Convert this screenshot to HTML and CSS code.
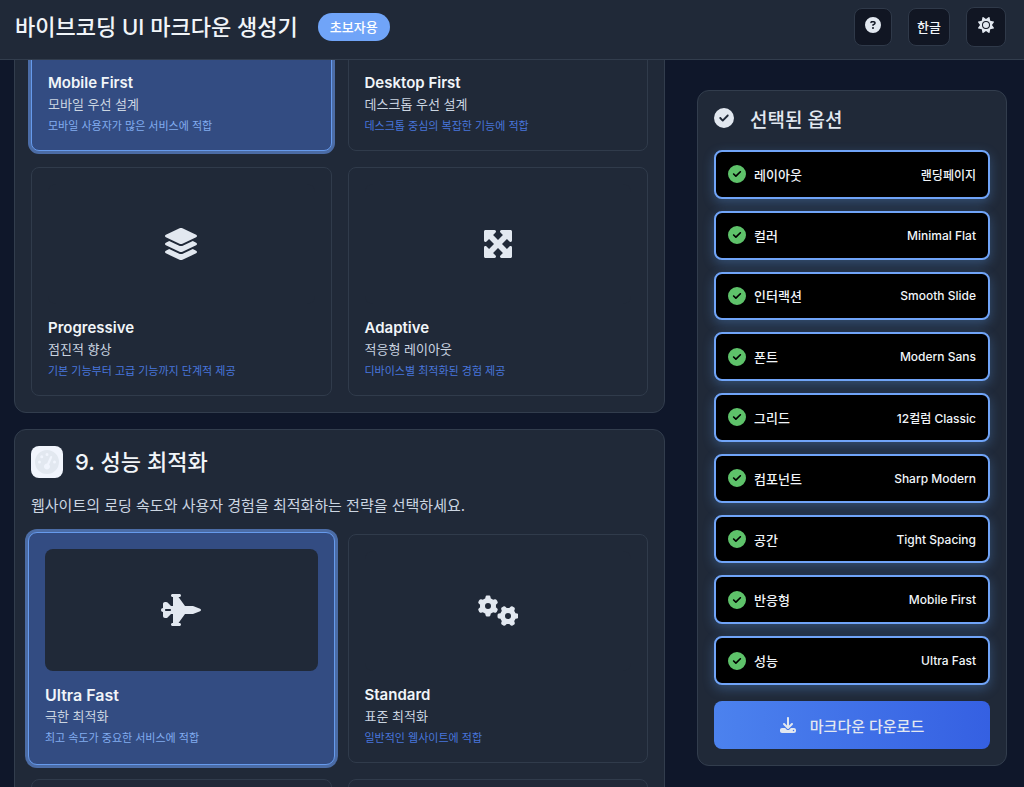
FILE: index.html
```html
<!DOCTYPE html>
<html lang="ko">
<head>
    <meta charset="UTF-8">
    <meta name="viewport" content="width=device-width, initial-scale=1.0">
    <title>바이브코딩 UI 마크다운 생성기</title>
    <link rel="stylesheet" href="styles.css">
</head>
<body>
    <svg class="sprite" aria-hidden="true">
        <symbol id="icon-check" viewBox="0 0 512 512">
            <path d="M256 512A256 256 0 1 0 256 0a256 256 0 1 0 0 512zM369 209L241 337c-9.400 9.400-24.600 9.400-33.900 0l-64-64c-9.400-9.400-9.400-24.600 0-33.900s24.600-9.400 33.900 0l47 47L335 175c9.400-9.400 24.600-9.400 33.900 0s9.400 24.600 0 33.900z"/>
        </symbol>
        <symbol id="icon-gear" viewBox="0 0 320 352">
            <path d="M308.500 135.300c7.100-6.300 9.900-16.200 6.200-25c-2.300-5.300-4.800-10.500-7.600-15.500L304 89.400c-3-5-6.300-9.900-9.800-14.600c-5.700-7.600-15.700-10.100-24.700-7.100l-28.200 9.300c-10.700-8.800-23-16-36.200-20.900L199 27.100c-1.900-9.300-9.100-16.700-18.500-17.800C173.900 8.400 167.200 8 160.400 8h-.7c-6.800 0-13.500 .4-20.100 1.200c-9.400 1.100-16.600 8.600-18.500 17.800L115 56.100c-13.300 5-25.500 12.100-36.200 20.900L50.500 67.800c-9-3-19-.5-24.700 7.100c-3.500 4.700-6.800 9.600-9.900 14.600l-3 5.300c-2.800 5-5.300 10.200-7.600 15.600c-3.700 8.700-.9 18.600 6.200 25l22.200 19.800C32.600 161.900 32 168.900 32 176s.6 14.100 1.700 20.900L11.500 216.700c-7.100 6.300-9.900 16.200-6.200 25c2.300 5.300 4.800 10.500 7.600 15.600l3 5.200c3 5.100 6.300 9.900 9.900 14.600c5.700 7.600 15.700 10.100 24.700 7.100l28.200-9.300c10.700 8.800 23 16 36.200 20.900l6.100 29.100c1.900 9.300 9.100 16.700 18.500 17.800c6.700 .8 13.500 1.200 20.400 1.200s13.700-.4 20.400-1.200c9.400-1.100 16.600-8.600 18.500-17.800l6.100-29.100c13.300-5 25.500-12.100 36.200-20.900l28.200 9.300c9 3 19 .5 24.700-7.100c3.500-4.700 6.800-9.500 9.800-14.600l3.100-5.400c2.800-5 5.300-10.200 7.600-15.500c3.700-8.700 .9-18.600-6.200-25l-22.200-19.800c1.100-6.800 1.700-13.800 1.700-20.900s-.6-14.100-1.700-20.900l22.200-19.800zM112 176a48 48 0 1 1 96 0 48 48 0 1 1 -96 0z"/>
        </symbol>
    </svg>

    <header class="header">
        <h1>바이브코딩 UI 마크다운 생성기</h1>
        <span class="badge">초보자용</span>
        <div class="header-actions">
            <button class="btn-header" aria-label="도움말">
                <svg class="icon" viewBox="0 0 512 512"><path d="M256 512A256 256 0 1 0 256 0a256 256 0 1 0 0 512zM169.800 165.300c7.900-22.300 29.100-37.300 52.800-37.300h58.300c34.900 0 63.100 28.300 63.100 63.100c0 22.600-12.100 43.500-31.700 54.800L280 264.400c-.2 13-10.900 23.600-24 23.600c-13.300 0-24-10.700-24-24V250.500c0-8.600 4.600-16.500 12.100-20.800l44.300-25.400c4.700-2.700 7.600-7.700 7.600-13.100c0-8.400-6.800-15.100-15.100-15.100H222.600c-3.400 0-6.400 2.100-7.500 5.300l-.4 1.200c-4.400 12.500-18.200 19-30.600 14.600s-19-18.200-14.600-30.600l.4-1.200zM224 352a32 32 0 1 1 64 0 32 32 0 1 1 -64 0z"/></svg>
            </button>
            <button class="btn-header">한글</button>
            <button class="btn-header btn-theme" aria-label="테마">
                <svg class="icon" viewBox="0 0 512 512"><path d="M361.500 1.200c5 2.100 8.600 6.600 9.600 11.900L391 121l107.900 19.800c5.300 1 9.800 4.600 11.900 9.600s1.500 10.700-1.600 15.200L446.900 256l62.300 90.300c3.100 4.500 3.700 10.200 1.600 15.200s-6.600 8.600-11.900 9.600L391 391 371.100 498.900c-1 5.300-4.600 9.800-9.600 11.900s-10.700 1.500-15.200-1.600L256 446.900l-90.300 62.300c-4.500 3.100-10.200 3.700-15.200 1.600s-8.600-6.600-9.600-11.900L121 391 13.100 371.100c-5.300-1-9.800-4.600-11.900-9.600s-1.500-10.700 1.600-15.200L65.100 256 2.800 165.700c-3.100-4.500-3.700-10.200-1.600-15.200s6.600-8.600 11.900-9.600L121 121 140.900 13.100c1-5.300 4.600-9.800 9.600-11.900s10.700-1.500 15.200 1.600L256 65.100 346.300 2.800c4.500-3.100 10.200-3.700 15.200-1.600zM160 256a96 96 0 1 1 192 0 96 96 0 1 1 -192 0zm224 0a128 128 0 1 0 -256 0 128 128 0 1 0 256 0z"/></svg>
            </button>
        </div>
    </header>

    <div class="container">
        <main class="sections">
            <section class="section section-scrolled">
                <div class="options">
                    <button class="card selected" aria-pressed="true">
                        <span class="preview"></span>
                        <span class="card-title">Mobile First</span>
                        <span class="card-sub">모바일 우선 설계</span>
                        <span class="card-desc">모바일 사용자가 많은 서비스에 적합</span>
                    </button>
                    <button class="card">
                        <span class="preview"></span>
                        <span class="card-title">Desktop First</span>
                        <span class="card-sub">데스크톱 우선 설계</span>
                        <span class="card-desc">데스크톱 중심의 복잡한 기능에 적합</span>
                    </button>
                    <button class="card">
                        <span class="preview">
                            <svg class="icon-preview" viewBox="0 0 576 512"><path d="M264.500 5.200c14.900-6.900 32.100-6.900 47 0l218.600 101c8.500 3.900 13.900 12.400 13.900 21.800s-5.400 17.900-13.900 21.800l-218.600 101c-14.900 6.900-32.100 6.900-47 0L45.900 149.800C37.400 145.800 32 137.300 32 128s5.400-17.900 13.900-21.800L264.500 5.200zM476.900 209.600l53.200 24.600c8.500 3.900 13.900 12.400 13.900 21.800s-5.400 17.900-13.900 21.800l-218.600 101c-14.900 6.900-32.100 6.900-47 0L45.900 277.800C37.400 273.800 32 265.300 32 256s5.400-17.900 13.900-21.800l53.200-24.600 152 70.200c23.400 10.800 50.400 10.800 73.800 0l152-70.200zm-152 198.200l152-70.200 53.200 24.600c8.500 3.900 13.900 12.400 13.900 21.800s-5.400 17.900-13.900 21.800l-218.600 101c-14.900 6.900-32.100 6.900-47 0L45.900 405.800C37.400 401.800 32 393.300 32 384s5.400-17.900 13.900-21.800l53.200-24.600 152 70.200c23.400 10.800 50.400 10.800 73.800 0z"/></svg>
                        </span>
                        <span class="card-title">Progressive</span>
                        <span class="card-sub">점진적 향상</span>
                        <span class="card-desc">기본 기능부터 고급 기능까지 단계적 제공</span>
                    </button>
                    <button class="card">
                        <span class="preview">
                            <svg class="icon-preview" viewBox="0 0 512 512"><path d="M200 32H56C42.700 32 32 42.700 32 56V200c0 9.700 5.800 18.500 14.800 22.200s19.300 1.700 26.200-5.200l40-40 79 79-79 79L73 295c-6.900-6.900-17.200-8.900-26.200-5.200S32 302.300 32 312V456c0 13.300 10.700 24 24 24H200c9.700 0 18.500-5.800 22.200-14.800s1.700-19.300-5.200-26.200l-40-40 79-79 79 79-40 40c-6.900 6.900-8.900 17.200-5.200 26.200s12.500 14.800 22.200 14.800H456c13.300 0 24-10.700 24-24V312c0-9.700-5.800-18.500-14.800-22.200s-19.300-1.700-26.200 5.200l-40 40-79-79 79-79 40 40c6.900 6.900 17.200 8.900 26.200 5.200s14.800-12.500 14.800-22.200V56c0-13.300-10.700-24-24-24H312c-9.700 0-18.500 5.800-22.200 14.800s-1.700 19.300 5.200 26.200l40 40-79 79-79-79 40-40c6.900-6.900 8.900-17.200 5.200-26.200S209.700 32 200 32z"/></svg>
                        </span>
                        <span class="card-title">Adaptive</span>
                        <span class="card-sub">적응형 레이아웃</span>
                        <span class="card-desc">디바이스별 최적화된 경험 제공</span>
                    </button>
                </div>
            </section>

            <section class="section">
                <div class="section-head">
                    <span class="section-icon">
                        <svg viewBox="0 0 512 512"><path d="M0 256a256 256 0 1 1 512 0A256 256 0 1 1 0 256zM288 96a32 32 0 1 0 -64 0 32 32 0 1 0 64 0zM256 416c35.300 0 64-28.700 64-64c0-17.400-6.900-33.100-18.100-44.600L366 161.700c5.300-12.100-.2-26.300-12.300-31.600s-26.300 .2-31.600 12.300L257.900 288c-.6 0-1.300 0-1.900 0c-35.300 0-64 28.700-64 64s28.700 64 64 64zM176 144a32 32 0 1 0 -64 0 32 32 0 1 0 64 0zM96 288a32 32 0 1 0 0-64 32 32 0 1 0 0 64zm352-32a32 32 0 1 0 -64 0 32 32 0 1 0 64 0z"/></svg>
                    </span>
                    <h2>9. 성능 최적화</h2>
                </div>
                <p class="section-desc">웹사이트의 로딩 속도와 사용자 경험을 최적화하는 전략을 선택하세요.</p>
                <div class="options">
                    <button class="card selected raised" aria-pressed="true">
                        <span class="preview">
                            <svg class="icon-preview" viewBox="0 0 640 512"><path d="M160 24c0-13.300 10.700-24 24-24H296c13.300 0 24 10.700 24 24s-10.700 24-24 24H280L384 192H500.400c7.700 0 15.300 1.400 22.500 4.100L625 234.400c9 3.400 15 12 15 21.600s-6 18.200-15 21.600L522.900 315.900c-7.200 2.700-14.800 4.100-22.500 4.100H384L280 464h16c13.300 0 24 10.700 24 24s-10.700 24-24 24H184c-13.300 0-24-10.700-24-24s10.700-24 24-24h8V320H160l-54.600 54.600c-6 6-14.100 9.400-22.600 9.400H64c-17.700 0-32-14.300-32-32V288c-17.700 0-32-14.300-32-32s14.300-32 32-32V160c0-17.700 14.300-32 32-32H82.700c8.500 0 16.600 3.400 22.600 9.400L160 192h32V48h-8c-13.300 0-24-10.700-24-24zM80 240c-8.800 0-16 7.200-16 16s7.200 16 16 16h64c8.800 0 16-7.200 16-16s-7.200-16-16-16H80z"/></svg>
                        </span>
                        <span class="card-title">Ultra Fast</span>
                        <span class="card-sub">극한 최적화</span>
                        <span class="card-desc">최고 속도가 중요한 서비스에 적합</span>
                    </button>
                    <button class="card">
                        <span class="preview">
                            <svg class="icon-preview" viewBox="0 0 640 512">
                                <use href="#icon-gear" width="320" height="352"/>
                                <use href="#icon-gear" width="320" height="352" transform="translate(480 336) rotate(90) translate(-160 -176)"/>
                            </svg>
                        </span>
                        <span class="card-title">Standard</span>
                        <span class="card-sub">표준 최적화</span>
                        <span class="card-desc">일반적인 웹사이트에 적합</span>
                    </button>
                    <button class="card" aria-label="옵션 3"><span class="preview"></span></button>
                    <button class="card" aria-label="옵션 4"><span class="preview"></span></button>
                </div>
            </section>
        </main>

        <aside class="sidebar">
            <div class="sidebar-head">
                <svg class="icon-head"><use href="#icon-check"/></svg>
                <h3>선택된 옵션</h3>
            </div>
            <ul class="selected-list">
                <li><svg class="icon-done"><use href="#icon-check"/></svg><span>레이아웃</span><b>랜딩페이지</b></li>
                <li><svg class="icon-done"><use href="#icon-check"/></svg><span>컬러</span><b>Minimal Flat</b></li>
                <li><svg class="icon-done"><use href="#icon-check"/></svg><span>인터랙션</span><b>Smooth Slide</b></li>
                <li><svg class="icon-done"><use href="#icon-check"/></svg><span>폰트</span><b>Modern Sans</b></li>
                <li><svg class="icon-done"><use href="#icon-check"/></svg><span>그리드</span><b>12컬럼 Classic</b></li>
                <li><svg class="icon-done"><use href="#icon-check"/></svg><span>컴포넌트</span><b>Sharp Modern</b></li>
                <li><svg class="icon-done"><use href="#icon-check"/></svg><span>공간</span><b>Tight Spacing</b></li>
                <li><svg class="icon-done"><use href="#icon-check"/></svg><span>반응형</span><b>Mobile First</b></li>
                <li><svg class="icon-done"><use href="#icon-check"/></svg><span>성능</span><b>Ultra Fast</b></li>
            </ul>
            <button class="btn-download">
                <svg class="icon" viewBox="0 0 512 512"><path d="M288 32c0-17.700-14.300-32-32-32s-32 14.300-32 32V274.700l-73.400-73.400c-12.500-12.500-32.800-12.500-45.300 0s-12.500 32.800 0 45.300l128 128c12.500 12.500 32.800 12.500 45.300 0l128-128c12.500-12.500 12.500-32.800 0-45.300s-32.800-12.500-45.300 0L288 274.700V32zM64 352c-35.300 0-64 28.700-64 64v32c0 35.300 28.700 64 64 64H448c35.300 0 64-28.700 64-64V416c0-35.300-28.700-64-64-64H346.500l-45.300 45.300c-25 25-65.500 25-90.500 0L165.500 352H64zm368 56a24 24 0 1 1 0 48 24 24 0 1 1 0-48z"/></svg>
                마크다운 다운로드
            </button>
        </aside>
    </div>
</body>
</html>
```
FILE: styles.css
```css
* {
    padding: 0;
    margin: 0;
    box-sizing: border-box;
}
body {
    height: 100vh;
    display: flex;
    flex-direction: column;
    overflow: hidden;
    background: #0f172a;
    color: #f1f5f9;
    font-family: Inter, "Noto Sans CJK KR", sans-serif;
    font-size: 16px;
}
button {
    font-family: inherit;
    color: inherit;
    cursor: pointer;
}
svg {
    fill: #e2e8f0;
    flex-shrink: 0;
}
.sprite {
    display: none;
}
.icon {
    width: 16px;
    height: 16px;
}

/* header */
.header {
    height: 60px;
    flex-shrink: 0;
    display: flex;
    align-items: center;
    gap: 16px;
    padding: 0 18px 6px 15px;
    background: #202938;
    border-bottom: 1px solid #323d4d;
    z-index: 1;
}
.header h1 {
    margin-right: 4px;
    font-size: 22px;
    line-height: 32px;
    font-weight: 500;
}
.badge {
    padding: 4px 12px;
    border-radius: 14px;
    background: #70a4f8;
    color: #fff;
    font-size: 13px;
    line-height: 20px;
    font-weight: 500;
}
.header-actions {
    margin-left: auto;
    display: flex;
    align-items: center;
    gap: 16px;
}
.btn-header {
    height: 38px;
    min-width: 38px;
    padding: 0 8px;
    display: flex;
    align-items: center;
    justify-content: center;
    background: #111623;
    border: 1px solid #2f3949;
    border-radius: 8px;
    font-size: 13px;
    font-weight: 500;
}
.btn-header .icon {
    margin-bottom: 4px;
}
.btn-theme {
    height: 40px;
    min-width: 40px;
}

/* layout */
.container {
    flex: 1;
    min-height: 0;
    display: flex;
    align-items: flex-start;
    gap: 32px;
    padding: 0 17px 0 14px;
}
.sections {
    flex: 1;
    display: flex;
    flex-direction: column;
    gap: 16px;
}
.section {
    padding: 16px;
    background: #202938;
    border: 1px solid #323d4d;
    border-radius: 12px;
}
/* first section is scrolled under the header */
.section-scrolled {
    margin-top: -155px;
}
.section-head {
    display: flex;
    align-items: center;
    gap: 12px;
    margin-bottom: 16px;
}
.section-head h2 {
    font-size: 22px;
    line-height: 32px;
    font-weight: 500;
}
.section-icon {
    width: 32px;
    height: 32px;
    display: flex;
    align-items: center;
    justify-content: center;
    background: #f1f5fd;
    border-radius: 8px;
}
.section-icon svg {
    width: 24px;
    height: 24px;
}
.section-desc {
    margin-bottom: 16px;
    color: #cbd5e1;
    font-size: 15px;
    line-height: 24px;
}

/* option cards */
.options {
    display: grid;
    grid-template-columns: 1fr 1fr;
    gap: 16px;
}
.card {
    display: flex;
    flex-direction: column;
    padding: 16px;
    text-align: left;
    background: #202938;
    border: 1px solid #303b4b;
    border-radius: 8px;
}
.selected {
    background: #334c82;
    border-color: #669aec;
    box-shadow: 0 0 0 3px #4b6ca6;
}
.raised {
    margin: -2px -3px;
    border-radius: 9px;
}
.preview {
    height: 120px;
    width: 100%;
    margin-bottom: 12px;
    display: flex;
    align-items: center;
    justify-content: center;
    background: #202938;
    border-radius: 8px;
}
.raised .preview {
    height: 122px;
}
.icon-preview {
    height: 32px;
}
.card-title {
    color: #f1f5f9;
    font-size: 15px;
    line-height: 24px;
    font-weight: 600;
}
.raised .card-title {
    font-size: 16px;
}
.card-sub {
    color: #cbd5e1;
    font-size: 13px;
    line-height: 18px;
}
.card-desc {
    margin-top: 5px;
    color: #4876dc;
    font-size: 11px;
    line-height: 16px;
}
.selected .card-desc {
    color: #82acf0;
}

/* sidebar */
.sidebar {
    width: 310px;
    margin-top: 30px;
    padding: 16px;
    background: #202938;
    border: 1px solid #323d4d;
    border-radius: 12px;
}
.sidebar-head {
    display: flex;
    align-items: flex-start;
    gap: 16px;
    margin-bottom: 16px;
}
.sidebar-head h3 {
    color: #e2e8f0;
    font-size: 19px;
    line-height: 27px;
    font-weight: 500;
}
.icon-head {
    width: 20px;
    height: 20px;
    margin-top: 1px;
}
.selected-list {
    min-height: 535px;
    display: grid;
    grid-auto-rows: 1fr;
    gap: 12px;
    margin-bottom: 16px;
    list-style: none;
}
.selected-list li {
    display: flex;
    align-items: center;
    gap: 8px;
    padding: 0 12px;
    background: #000;
    border: 2px solid #70a4f8;
    border-radius: 8px;
    box-shadow: 0 4px 12px rgba(96, 165, 250, 0.3);
    font-size: 13px;
    font-weight: 500;
}
.selected-list b {
    margin-left: auto;
    font-size: 12px;
    font-weight: 500;
}
.icon-done {
    width: 18px;
    height: 18px;
    fill: #5ec26a;
}
.btn-download {
    width: 100%;
    height: 48px;
    display: flex;
    align-items: center;
    justify-content: center;
    gap: 14px;
    background: linear-gradient(90deg, #4c82ee, #3560e2);
    border: none;
    border-radius: 8px;
    color: #e2e8f0;
    font-size: 15px;
    font-weight: 500;
}
```
